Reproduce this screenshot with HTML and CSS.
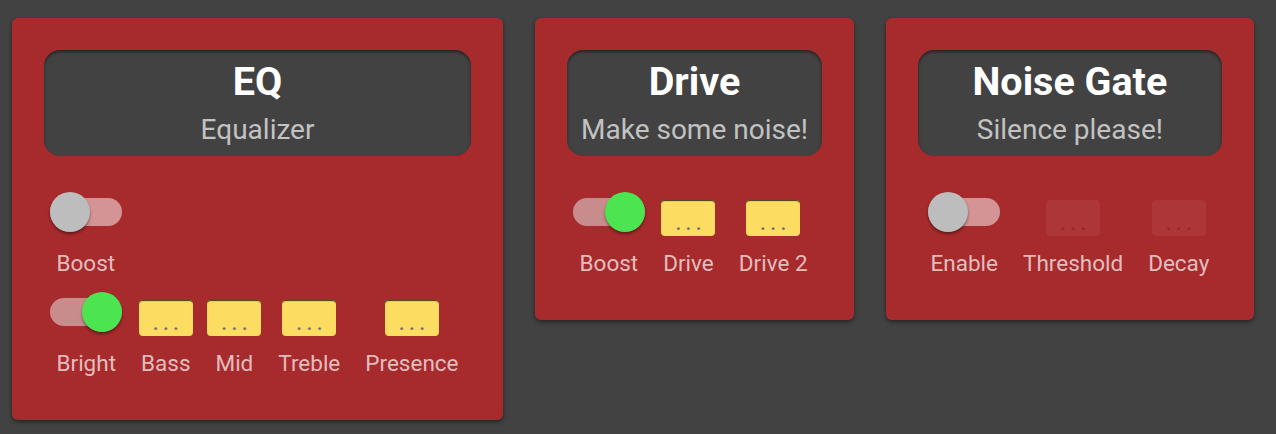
FILE: index.html
```html
<!DOCTYPE html>
<html>
<head>
<meta charset="utf-8">
<link rel="stylesheet" href="styles.css">
</head>
<body>
<div class="board">
  <section class="card">
    <header class="head">
      <div class="title">EQ</div>
      <div class="subtitle">Equalizer</div>
    </header>
    <div class="row">
      <div class="item">
        <div class="control"><span class="toggle"><span class="track"></span><span class="thumb"></span></span></div>
        <div class="label">Boost</div>
      </div>
    </div>
    <div class="row">
      <div class="item">
        <div class="control"><span class="toggle on"><span class="track"></span><span class="thumb"></span></span></div>
        <div class="label">Bright</div>
      </div>
      <div class="item">
        <div class="control"><span class="knob">...</span></div>
        <div class="label">Bass</div>
      </div>
      <div class="item">
        <div class="control"><span class="knob">...</span></div>
        <div class="label">Mid</div>
      </div>
      <div class="item">
        <div class="control"><span class="knob">...</span></div>
        <div class="label">Treble</div>
      </div>
      <div class="item">
        <div class="control"><span class="knob">...</span></div>
        <div class="label">Presence</div>
      </div>
    </div>
  </section>

  <section class="card">
    <header class="head">
      <div class="title">Drive</div>
      <div class="subtitle">Make some noise!</div>
    </header>
    <div class="row">
      <div class="item">
        <div class="control"><span class="toggle on"><span class="track"></span><span class="thumb"></span></span></div>
        <div class="label">Boost</div>
      </div>
      <div class="item">
        <div class="control"><span class="knob">...</span></div>
        <div class="label">Drive</div>
      </div>
      <div class="item">
        <div class="control"><span class="knob">...</span></div>
        <div class="label">Drive 2</div>
      </div>
    </div>
  </section>

  <section class="card">
    <header class="head">
      <div class="title">Noise Gate</div>
      <div class="subtitle">Silence please!</div>
    </header>
    <div class="row">
      <div class="item">
        <div class="control"><span class="toggle"><span class="track"></span><span class="thumb"></span></span></div>
        <div class="label">Enable</div>
      </div>
      <div class="item">
        <div class="control"><span class="knob disabled">...</span></div>
        <div class="label">Threshold</div>
      </div>
      <div class="item">
        <div class="control"><span class="knob disabled">...</span></div>
        <div class="label">Decay</div>
      </div>
    </div>
  </section>
</div>
</body>
</html>
```
FILE: styles.css
```css
html, body {
  margin: 0;
  padding: 0;
  background: #424242;
  font-family: Roboto, "Noto Sans", "Liberation Sans", sans-serif;
}

.board {
  display: flex;
  align-items: flex-start;
  gap: 32px;
  padding: 18px 12px;
}

.card {
  background: #a72a2c;
  border-radius: 6px;
  padding: 32px;
  box-shadow: 0 2px 4px rgba(0, 0, 0, 0.45);
}

.head {
  background: #424242;
  border-radius: 16px;
  padding: 11px 14px 10px;
  margin-bottom: 32px;
  text-align: center;
  box-shadow: inset 0 2px 3px rgba(0, 0, 0, 0.45);
}

.title {
  color: #ffffff;
  font-size: 39.5px;
  font-weight: 700;
  line-height: 42px;
  white-space: nowrap;
}

.subtitle {
  color: #c2c2c2;
  font-size: 28px;
  line-height: 33px;
  margin-top: 10px;
  white-space: nowrap;
}

.row {
  display: flex;
}

.item {
  display: flex;
  flex-direction: column;
  align-items: center;
  margin: 4px;
  padding-bottom: 8px;
}

.control {
  height: 44px;
  display: flex;
  align-items: flex-start;
}

.label {
  margin-top: 14px;
  padding: 0 8.5px;
  font-size: 22.5px;
  line-height: 26px;
  color: rgba(255, 255, 255, 0.7);
  white-space: nowrap;
}

.toggle {
  position: relative;
  display: block;
  width: 72px;
  height: 40px;
}

.track {
  position: absolute;
  left: 0;
  top: 6px;
  width: 72px;
  height: 28px;
  border-radius: 14px;
  background: #d49495;
}

.toggle.on .track {
  background: #c98c8d;
}

.thumb {
  position: absolute;
  left: 0;
  top: 0;
  width: 40px;
  height: 40px;
  border-radius: 50%;
  background: #bdbdbd;
  box-shadow: 0 2px 3px rgba(0, 0, 0, 0.4);
}

.toggle.on .thumb {
  left: 32px;
  background: #4ce450;
}

.knob {
  display: block;
  box-sizing: border-box;
  width: 54px;
  height: 36px;
  margin-top: 8px;
  padding-top: 15px;
  border-radius: 4px;
  background: #fddc62;
  box-shadow: inset 0 2px 1px -1px rgba(0, 0, 0, 0.75);
  color: #707070;
  font-size: 18px;
  font-weight: 700;
  line-height: 18px;
  letter-spacing: 5px;
  text-align: center;
  text-indent: 5px;
}

.knob.disabled {
  background: rgba(255, 255, 255, 0.06);
  box-shadow: none;
  color: rgba(120, 20, 20, 0.45);
}
```
